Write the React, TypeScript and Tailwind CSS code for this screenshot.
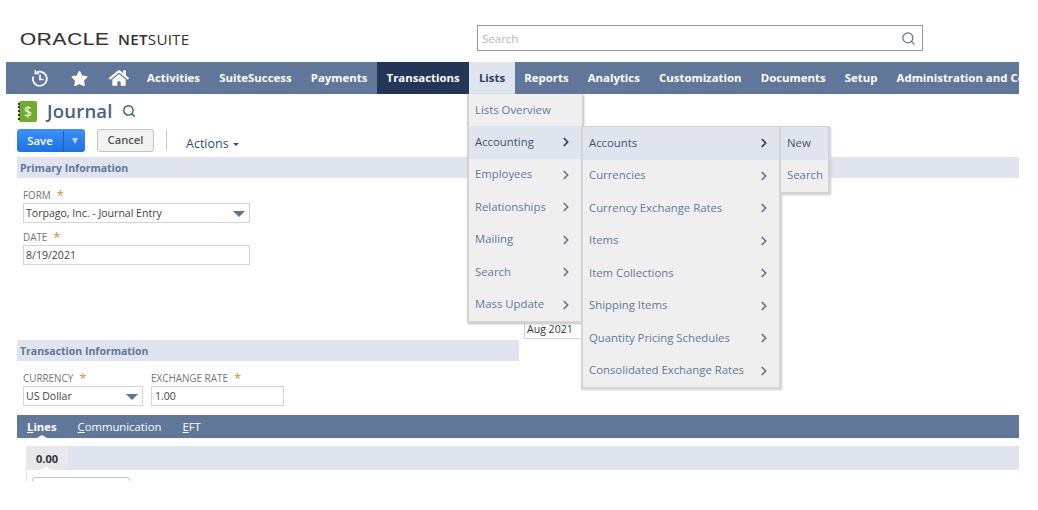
import { FaHome, FaStar } from "react-icons/fa";
import { ChevronRight, Search } from "lucide-react";

const navItems = ["Activities", "SuiteSuccess", "Payments", "Transactions", "Lists", "Reports", "Analytics", "Customization", "Documents", "Setup", "Administration and Company"];
const listsMenu = ["Accounting", "Employees", "Relationships", "Mailing", "Search", "Mass Update"];
const accountsMenu = ["Accounts", "Currencies", "Currency Exchange Rates", "Items", "Item Collections", "Shipping Items", "Quantity Pricing Schedules", "Consolidated Exchange Rates"];

function Caret() {
    return <span className="w-0 h-0 border-x-[6px] border-x-transparent border-t-[6px] border-t-[#5b7396]" />;
}

function Label({ text }: { text: string }) {
    return (
        <div className="h-[16px] flex items-start text-[9.9px] leading-[17px] text-[#757575]">
            {text}
            <span className="ml-[6px] mt-[2px] text-[13px] leading-[13px] text-[#d5902c]">*</span>
        </div>
    );
}

function MenuRow({ label, active, arrowAt }: { label: string; active?: boolean; arrowAt: string }) {
    return (
        <div className={`h-[32.5px] flex items-center pl-[6px] pb-[2px] text-[11.35px] relative w-full ${active ? "bg-[#dfe4ee] text-[#44546f]" : "text-[#64799b]"}`}>
            {label}
            <ChevronRight size={14} strokeWidth={3} className={`absolute top-[9px] ${arrowAt} ${active ? "text-[#2c3f60]" : "text-[#5f7596]"}`} />
        </div>
    );
}

export default function App() {
    return (
        <div className="w-[1038px] h-[510px] bg-white relative overflow-hidden font-['Open_Sans',sans-serif]">
            {/* Header */}
            <header className="h-[62px] flex">
                <div className="w-[477px] pl-[20px] pt-[29px] flex items-start text-[#333] leading-[20px]">
                    <span className="w-[98px] whitespace-nowrap">
                        <span className="inline-block origin-left scale-x-[1.22] text-[17px] font-['Liberation_Sans',sans-serif] tracking-[0.6px] [-webkit-text-stroke:0.2px_#333]">ORACLE</span>
                    </span>
                    <span className="text-[15.2px] font-semibold tracking-[0.3px]">NET</span>
                    <span className="text-[15.2px] tracking-[0.2px]">SUITE</span>
                </div>
                <div className="mt-[25px] w-[446px] h-[26px] border border-[#999] flex items-center justify-between pl-[4px] pr-[6px]">
                    <span className="text-[11.5px] mt-[1px] text-[#b5b5b5]">Search</span>
                    <Search size={15} strokeWidth={2} className="text-[#5f7596]" />
                </div>
            </header>

            {/* Main nav */}
            <nav className="ml-[6px] w-[1013px] h-[32px] bg-[#607799] flex text-[11.4px] font-bold text-white overflow-hidden">
                <div className="w-[131.5px] shrink-0 relative flex items-center gap-[22px] pl-[25px]">
                    <svg width="18" height="18" viewBox="0 0 18 18" fill="none" stroke="white" strokeWidth="1.7">
                        <path d="M5.5 3.6A7 7 0 1 1 2.2 7.5" />
                        <path d="M4.2 1v3.6h3.6" strokeWidth="1.4" />
                        <path d="M9 5.5V10.5H12.6" />
                    </svg>
                    <FaStar size={17} />
                    <FaHome size={20} className="ml-[-1px]" />
                </div>
                {navItems.map((item) => (
                    <div
                        key={item}
                        className={`shrink-0 px-[9.6px] flex items-center whitespace-nowrap ${item === "Transactions" ? "bg-[#233658]" : ""} ${item === "Lists" ? "bg-[#dfe4ee] text-[#2c3f60]" : ""}`}
                    >
                        {item}
                    </div>
                ))}
            </nav>

            {/* Page */}
            <main className="ml-[17px] w-[1002px] h-[387px] overflow-hidden">
                <div className="h-[34px] flex items-center pl-[2px]">
                    <div className="relative w-[18px] h-[21px] bg-[#6fac2c] rounded-[2px] flex items-center justify-center text-white text-[14px]">
                        $
                        <span className="absolute left-[-1px] top-[2px] bottom-[2px] w-[2px] border-l-2 border-dotted border-[#333]" />
                    </div>
                    <h1 className="ml-[10px] text-[18.5px] font-semibold text-[#4d5f79] tracking-[0.2px]">Journal</h1>
                    <Search size={14} strokeWidth={2.4} className="ml-[9px] text-[#2c5a96]" />
                </div>
                <div className="h-[24px] flex items-center">
                    <div className="w-[68px] h-[23px] pt-[2px] rounded-[3px] bg-gradient-to-b from-[#3c90f5] to-[#1f72e0] flex items-center text-white text-[11.4px] font-semibold">
                        <span className="w-[46px] text-center">Save</span>
                        <span className="w-[22px] h-full border-l border-[#1a5fb5] flex items-center justify-center">
                            <span className="w-0 h-0 border-x-[3.5px] border-x-transparent border-t-[6px] border-t-[#b9d4f5]" />
                        </span>
                    </div>
                    <div className="ml-[12px] w-[57px] h-[23px] rounded-[3px] border border-[#c4c4c4] bg-[#f2f2f2] flex items-center justify-center text-[11.2px] font-semibold text-[#555]">Cancel</div>
                    <div className="ml-[12px] w-px h-[20px] bg-[#c8c8c8]" />
                    <div className="ml-[19px] mt-[9px] flex items-center text-[12.5px] text-[#2c4f7c]">
                        Actions
                        <span className="ml-[4px] w-0 h-0 border-x-[3px] border-x-transparent border-t-[3.5px] border-t-[#2c4f7c]" />
                    </div>
                </div>

                <div className="mt-[5px] h-[21px] pt-[2px] bg-[#dfe4ee] flex items-center pl-[3px] text-[10.5px] font-bold text-[#607799]">Primary Information</div>

                <div className="h-[162px] flex">
                    <div className="w-[507px] pl-[6px] pt-[9px]">
                        <Label text="FORM" />
                        <div className="w-[227px] h-[20px] pt-[2px] border border-[#d5d5d5] flex items-center justify-between pl-[2px] pr-[4px] text-[10.55px] text-[#444]">
                            Torpago, Inc. - Journal Entry
                            <Caret />
                        </div>
                        <div className="mt-[6px]">
                            <Label text="DATE" />
                        </div>
                        <div className="w-[227px] h-[20px] pt-[2px] border border-[#d5d5d5] flex items-center pl-[2px] text-[10.55px] text-[#444]">8/19/2021</div>
                    </div>
                    <div className="self-end mb-[1px] w-[58px] h-[19px] pt-[2px] border-l border-b border-[#d5d5d5] flex items-center pl-[2px] text-[10.55px] text-[#333]">Aug 2021</div>
                </div>

                <div className="w-[502px] h-[21px] pt-[2px] bg-[#dfe4ee] flex items-center pl-[3px] text-[10.5px] font-bold text-[#607799]">Transaction Information</div>

                <div className="h-[54px] pl-[6px] pt-[9px] flex gap-[8px]">
                    <div>
                        <Label text="CURRENCY" />
                        <div className="w-[120px] h-[20px] pt-[2px] border border-[#d5d5d5] flex items-center justify-between pl-[2px] pr-[4px] text-[10.55px] text-[#444]">
                            US Dollar
                            <Caret />
                        </div>
                    </div>
                    <div>
                        <Label text="EXCHANGE RATE" />
                        <div className="w-[133px] h-[20px] pt-[2px] border border-[#d5d5d5] flex items-center pl-[3px] text-[10.55px] text-[#444]">1.00</div>
                    </div>
                </div>

                {/* Tabs */}
                <div className="h-[23px] bg-[#607799] flex items-center pl-[10px] text-[11.3px] text-white">
                    <div className="relative h-full pt-[2px] flex items-center font-bold">
                        <span><u>L</u>ines</span>
                        <span className="absolute bottom-0 left-[10px] w-0 h-0 border-x-[5px] border-x-transparent border-b-[3px] border-b-white" />
                    </div>
                    <span className="ml-[21px] mt-[2px]"><u>C</u>ommunication</span>
                    <span className="ml-[21px] mt-[2px]"><u>E</u>FT</span>
                </div>

                <div className="ml-[9px] mt-[8px] h-[24px] bg-[#dfe4ee]">
                    <div className="relative w-[42px] h-full pt-[2px] bg-[#e7e7ec] flex items-center justify-center text-[11px] font-bold text-[#333]">
                        0.00
                        <span className="absolute bottom-0 left-[14px] w-0 h-0 border-x-[6px] border-x-transparent border-b-[3px] border-b-white" />
                    </div>
                </div>
                <div className="ml-[9px] h-[11px] border-l border-[#e2e2e2] pl-[5px] pt-[7px] overflow-hidden">
                    <div className="w-[98px] h-[10px] border border-[#c4c4c4] rounded-[3px]" />
                </div>
            </main>

            {/* Lists dropdown */}
            <div className="absolute left-[467px] top-[94px] w-[116px] shadow-[1px_1px_2px_#bbb]">
                <div className="h-[32px] w-[116px] pb-[1px] bg-[#efefef] border-l-2 border-r border-[#d4d4d4] flex items-center pl-[6px] text-[11.35px] text-[#64799b]">Lists Overview</div>
                <div className="w-[115px] bg-[#efefef] border-l-2 border-b-2 border-[#d4d4d4]">
                    {listsMenu.map((item, i) => (
                        <MenuRow key={item} label={item} active={i === 0} arrowAt="left-[90px]" />
                    ))}
                </div>
            </div>

            {/* Accounting submenu */}
            <div className="absolute left-[581px] top-[126px] w-[200px] bg-[#efefef] border-x-2 border-y border-b-2 border-[#d4d4d4] shadow-[1px_1px_2px_#ccc]">
                {accountsMenu.map((item, i) => (
                    <MenuRow key={item} label={item} active={i === 0} arrowAt="left-[174px]" />
                ))}
            </div>

            {/* Accounts submenu */}
            <div className="absolute left-[779px] top-[126px] w-[51px] bg-[#efefef] border-x-2 border-y border-b-2 border-[#d4d4d4] shadow-[1px_1px_2px_#ccc] text-[11.35px]">
                <div className="h-[32.5px] pb-[2px] bg-[#dfe4ee] text-[#44546f] flex items-center pl-[6px]">New</div>
                <div className="h-[32.5px] pb-[2px] text-[#64799b] flex items-center pl-[6px]">Search</div>
            </div>
        </div>
    );
}
